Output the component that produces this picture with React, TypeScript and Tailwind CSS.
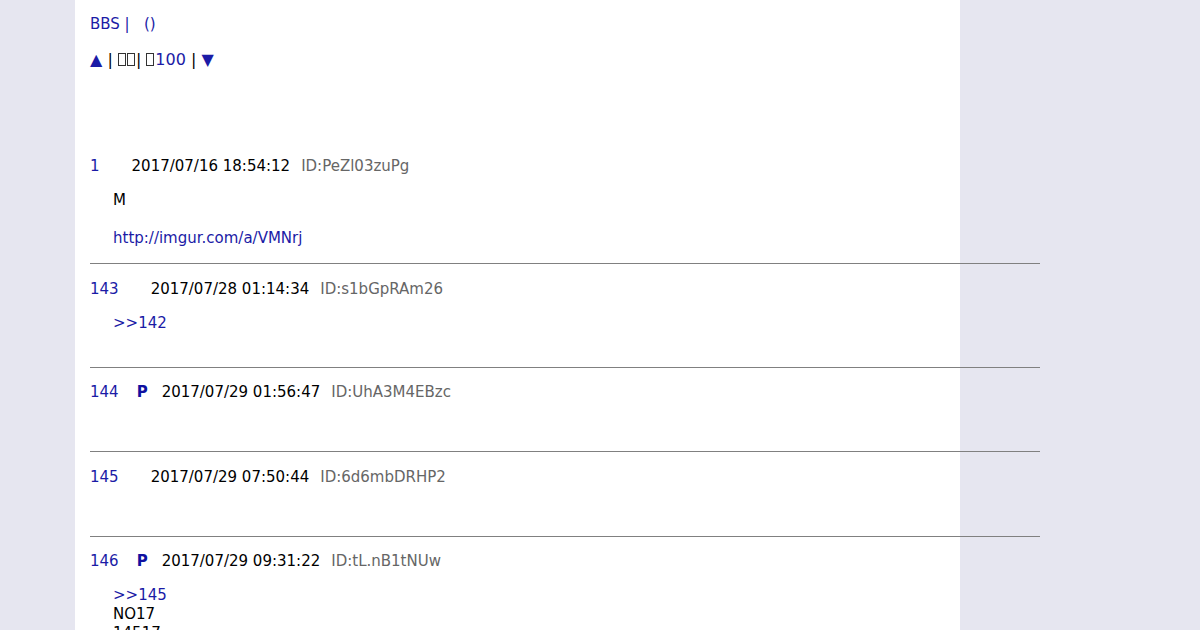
import React from 'react'

type Post = {
  no: number
  name?: string
  date: string
  id: string
  body: React.ReactNode[]
}

const posts: Post[] = [
  {
    no: 1,
    date: '2017/07/16 18:54:12',
    id: 'ID:PeZl03zuPg',
    body: ['M', '', <a key="l" className="text-[#1b1ba6]">http://imgur.com/a/VMNrj</a>],
  },
  {
    no: 143,
    date: '2017/07/28 01:14:34',
    id: 'ID:s1bGpRAm26',
    body: [<a key="r" className="text-[#1b1ba6]">&gt;&gt;142</a>, ''],
  },
  { no: 144, name: 'P', date: '2017/07/29 01:56:47', id: 'ID:UhA3M4EBzc', body: [''] },
  { no: 145, date: '2017/07/29 07:50:44', id: 'ID:6d6mbDRHP2', body: [''] },
  {
    no: 146,
    name: 'P',
    date: '2017/07/29 09:31:22',
    id: 'ID:tL.nB1tNUw',
    body: [<a key="r" className="text-[#1b1ba6]">&gt;&gt;145</a>, 'NO17', '14517', '', ''],
  },
]

// missing-glyph box, as the original page shows for its untranslated words
const Tofu = () => (
  <span className="inline-block w-[8px] h-[13px] border border-[#333] align-[-1px] mr-[1px]" />
)

export default function App() {
  return (
    <div className="min-h-screen bg-[#e6e6f0] font-['DejaVu_Sans',sans-serif]">
      <div className="ml-[75px] w-[885px] min-h-screen bg-white px-[15px] pt-[15px]">
        <div className="w-[950px]">
          <p className="text-[15px] leading-[19px] text-[#1b1ba6]">
            BBS |&nbsp;&nbsp;&nbsp;()
          </p>
          <p className="mt-[16px] text-[16px] leading-[19px] text-black">
            <a className="text-[#1b1ba6]">▲</a> | <Tofu />
            <Tofu />| <a className="text-[#1b1ba6]"><Tofu />100</a> | <a className="text-[#1b1ba6]">▼</a>
          </p>

          <div className="mt-[88px]">
            {posts.map((p, i) => (
              <div key={p.no} className={i > 0 ? 'mt-[15.5px]' : ''}>
                <div className="flex items-baseline text-[15px] leading-[19px]">
                  <a className="text-[#1b1ba6]">{p.no}</a>
                  <b className="ml-[18px] text-[#1010a0] font-bold">{p.name}</b>
                  <span className="ml-[14px] text-black">{p.date}</span>
                  <span className="ml-[11px] text-[#666]">{p.id}</span>
                </div>
                <div className="mt-[15px] pl-[23px] text-[15px] leading-[19px] text-black">
                  {p.body.map((b, j) => (
                    <div key={j} className="h-[19px]">
                      {b}
                    </div>
                  ))}
                </div>
                <hr className="mt-[15px] border-0 border-t border-[#808080]" />
              </div>
            ))}
          </div>
        </div>
      </div>
    </div>
  )
}
